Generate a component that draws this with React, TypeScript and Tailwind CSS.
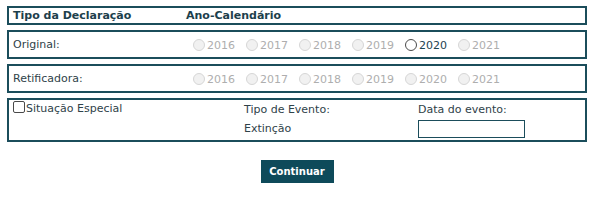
import { useState } from 'react'

const years = [2016, 2017, 2018, 2019, 2020, 2021]

const font = { fontFamily: '"DejaVu Sans", Verdana, sans-serif' }

function YearRadio({ year, enabled }: { year: number; enabled: boolean }) {
  return (
    <label className="flex w-[53px] shrink-0 items-center">
      <span
        className={
          enabled
            ? 'h-[12px] w-[12px] shrink-0 rounded-full border border-[#4a4a4a] bg-white'
            : 'h-[12px] w-[12px] shrink-0 rounded-full border border-[#d6d6d6] bg-[#f1f1f1]'
        }
      />
      <span className={enabled ? 'ml-[2px] translate-y-[1px] text-[#1d4452]' : 'ml-[2px] translate-y-[1px] text-[#aeaeae]'}>
        {year}
      </span>
    </label>
  )
}

function YearRow({ label, active }: { label: string; active: number | null }) {
  return (
    <div className="flex h-[29px] w-[580px] items-center border-2 border-[#1b4d5b] pl-[4px]">
      <div className="w-[180px] shrink-0 text-[#2f4249]">{label}</div>
      <div className="flex">
        {years.map((y) => (
          <YearRadio key={y} year={y} enabled={y === active} />
        ))}
      </div>
    </div>
  )
}

export default function App() {
  const [especial, setEspecial] = useState(false)

  return (
    <div className="min-h-[202px] bg-white pt-[6px] pl-[7px] text-[11px] leading-[14px]" style={font}>
      <div className="flex flex-col gap-[5px]">
        <div className="flex h-[19px] w-[580px] items-center border-2 border-[#1b4d5b] pl-[4px] font-bold text-[#1d3f4c]">
          <div className="w-[173px] shrink-0">Tipo da Declaração</div>
          <div>Ano-Calendário</div>
        </div>

        <YearRow label="Original:" active={2020} />
        <YearRow label="Retificadora:" active={null} />

        <div className="grid h-[44px] w-[580px] grid-cols-[231px_174px_1fr] grid-rows-[19px_20px] border-2 border-[#1b4d5b] pl-[4px] text-[#2f4249]">
          <label className="flex items-start pt-[1px]" onClick={() => setEspecial(!especial)}>
            <span className="h-[12px] w-[12px] shrink-0 rounded-[2px] border border-[#4a4a4a] bg-white" />
            <span className="ml-[1px] translate-y-[1px]">Situação Especial</span>
          </label>
          <div className="flex items-center pt-[1px]">Tipo de Evento:</div>
          <div className="flex items-center pt-[1px]">Data do evento:</div>
          <div />
          <div className="flex items-center">Extinção</div>
          <div className="flex items-center">
            <input className="h-[18px] w-[107px] border border-[#1b4d5b] bg-white outline-none" />
          </div>
        </div>
      </div>

      <div className="mt-[18px] flex w-[580px] justify-center">
        <button className="h-[23px] w-[73px] bg-[#0e4a5a] text-[10px] font-bold text-white">Continuar</button>
      </div>
    </div>
  )
}
